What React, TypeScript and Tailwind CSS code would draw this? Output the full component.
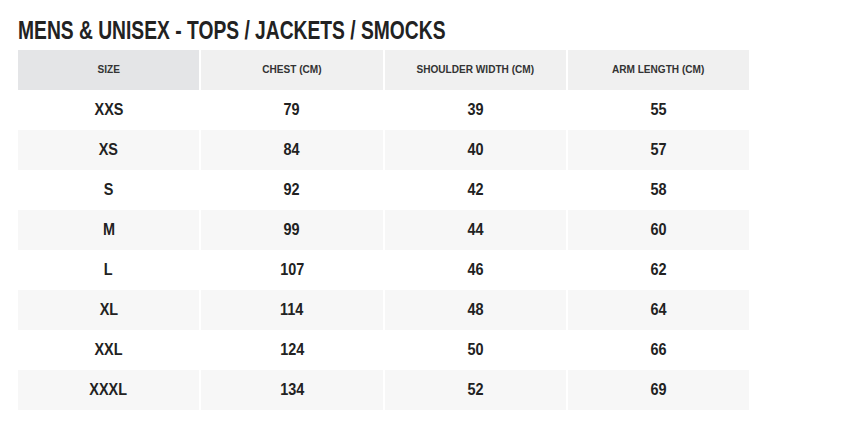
const headers = ["SIZE", "CHEST (CM)", "SHOULDER WIDTH (CM)", "ARM LENGTH (CM)"];

const rows = [
  ["XXS", "79", "39", "55"],
  ["XS", "84", "40", "57"],
  ["S", "92", "42", "58"],
  ["M", "99", "44", "60"],
  ["L", "107", "46", "62"],
  ["XL", "114", "48", "64"],
  ["XXL", "124", "50", "66"],
  ["XXXL", "134", "52", "69"],
];

export default function App() {
  return (
    <div className="w-[850px] h-[427px] bg-white pl-[18px] pt-[15px] text-[#222] font-['Liberation_Sans',Arial,sans-serif]">
      <h1 className="origin-left scale-x-[0.77] whitespace-nowrap text-[25px] font-bold leading-[30px]">
        MENS &amp; UNISEX - TOPS / JACKETS / SMOCKS
      </h1>
      <div className="mt-[5px] grid w-[731px] grid-cols-4 gap-x-[2px]">
        {headers.map((h, i) => (
          <div
            key={h}
            className={
              "flex h-10 items-center justify-center text-[10.5px] font-bold text-[#333] " +
              (i === 0 ? "bg-[#e4e5e7]" : "bg-[#f0f0f0]")
            }
          >
            <span className="inline-block scale-x-[0.96] whitespace-nowrap">{h}</span>
          </div>
        ))}
        {rows.map((row, r) =>
          row.map((cell, c) => (
            <div
              key={r + "-" + c}
              className={
                "flex h-10 items-center justify-center text-[17px] font-bold " +
                (r % 2 === 1 ? "bg-[#f7f7f7]" : "bg-white")
              }
            >
              <span className="inline-block scale-x-[0.85]">{cell}</span>
            </div>
          ))
        )}
      </div>
    </div>
  );
}
